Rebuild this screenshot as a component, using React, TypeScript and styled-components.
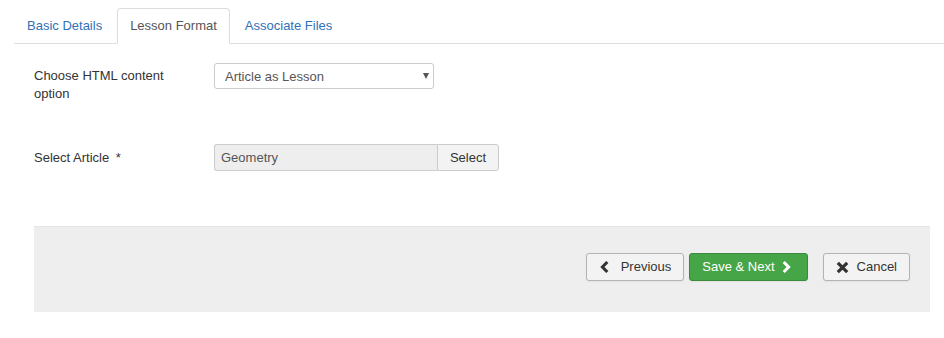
import React, { FC } from "react";
import styled, { createGlobalStyle } from "styled-components";

const GlobalStyle = createGlobalStyle`
	body {
		margin: 0;
		background: #fff;
		font-family: "Liberation Sans", Arial, sans-serif;
		font-size: 13px;
		line-height: 18px;
		color: #333;
	}
`;

interface TabProps {
	active?: boolean;
}

interface ButtonProps {
	variant?: "default" | "success";
	offset?: number;
	iconGap: number;
	padL: number;
	padR: number;
}

interface LabelProps {
	top?: number;
}

const tabs = ["Basic Details", "Lesson Format", "Associate Files"];

const ChevronLeft: FC = () => (
	<svg width="9" height="12" viewBox="0 0 9 12">
		<path d="M7.3 1 L2.4 6 L7.3 11" fill="none" stroke="#333" strokeWidth="3" />
	</svg>
);

const ChevronRight: FC = () => (
	<svg width="9" height="12" viewBox="0 0 9 12">
		<path d="M1.7 1 L6.6 6 L1.7 11" fill="none" stroke="#fff" strokeWidth="3" />
	</svg>
);

const Cross: FC = () => (
	<svg width="13" height="13" viewBox="0 0 13 13">
		<path d="M1.8 1.8 L11.2 11.2 M11.2 1.8 L1.8 11.2" stroke="#333" strokeWidth="3.2" />
	</svg>
);

const App: FC = () => {
	return (
		<Page>
			<GlobalStyle />
			<TabBar>
				{tabs.map((t) => (
					<Tab key={t} active={t === "Lesson Format"}>
						{t}
					</Tab>
				))}
			</TabBar>
			<Content>
				<FormRow style={{ height: 81 }}>
					<Label top={4}>Choose HTML content option</Label>
					<SelectBox>
						<span>Article as Lesson</span>
						<Caret />
					</SelectBox>
				</FormRow>
				<FormRow>
					<Label top={5}>
						Select Article <Star>*</Star>
					</Label>
					<InputGroup>
						<ReadOnlyInput>Geometry</ReadOnlyInput>
						<AddonButton>Select</AddonButton>
					</InputGroup>
				</FormRow>
				<Footer>
					<Button iconGap={12} padL={13} padR={12}>
						<ChevronLeft />
						Previous
					</Button>
					<Button variant="success" offset={5} iconGap={7} padL={12} padR={16}>
						Save &amp; Next
						<ChevronRight />
					</Button>
					<Button offset={15} iconGap={8} padL={12} padR={12}>
						<Cross />
						Cancel
					</Button>
				</Footer>
			</Content>
		</Page>
	);
};

const Page = styled.div`
	padding: 8px 0 0 14px;
`;

const TabBar = styled.div`
	display: flex;
	border-bottom: 1px solid #ddd;
	height: 35px;
`;

const Tab = styled.div<TabProps>`
	padding: 8px 12px;
	line-height: 18px;
	margin-right: 2px;
	margin-bottom: -1px;
	border: 1px solid ${(p) => (p.active ? "#ddd" : "transparent")};
	border-bottom-color: ${(p) => (p.active ? "#fff" : "transparent")};
	border-radius: 4px 4px 0 0;
	background: ${(p) => (p.active ? "#fff" : "transparent")};
	color: ${(p) => (p.active ? "#555" : "#3071b8")};
`;

const Content = styled.div`
	padding: 19px 14px 0 20px;
`;

const FormRow = styled.div`
	display: flex;
	align-items: flex-start;
`;

const Label = styled.div<LabelProps>`
	width: 160px;
	padding-top: ${(p) => p.top ?? 4}px;
	margin-right: 20px;
	color: #333;
`;

const Star = styled.span`
	margin-left: 3px;
`;

const SelectBox = styled.div`
	position: relative;
	box-sizing: border-box;
	width: 220px;
	height: 26px;
	border: 1px solid #ccc;
	border-radius: 3px;
	padding: 4px 10px 3px;
	color: #555;
	background: #fff;
`;

const Caret = styled.span`
	position: absolute;
	right: 4px;
	top: 9px;
	width: 0;
	height: 0;
	border-left: 3px solid transparent;
	border-right: 3px solid transparent;
	border-top: 6px solid #555;
`;

const InputGroup = styled.div`
	display: flex;
	height: 27px;
`;

const ReadOnlyInput = styled.div`
	box-sizing: border-box;
	width: 223px;
	height: 27px;
	padding: 4px 6px;
	background: #eee;
	border: 1px solid #ccc;
	border-right: none;
	border-radius: 3px 0 0 3px;
	color: #555;
`;

const AddonButton = styled.div`
	box-sizing: border-box;
	width: 62px;
	height: 27px;
	padding: 4px 0;
	text-align: center;
	background: #f3f3f3;
	border: 1px solid #ccc;
	border-radius: 0 3px 3px 0;
	color: #333;
`;

const Footer = styled.div`
	margin-top: 55px;
	height: 86px;
	box-sizing: border-box;
	background: #eee;
	border-top: 1px solid #e5e5e5;
	display: flex;
	justify-content: flex-end;
	align-items: flex-start;
	padding: 26px 20px 0 0;
`;

const Button = styled.div<ButtonProps>`
	box-sizing: border-box;
	height: 28px;
	display: flex;
	align-items: center;
	gap: ${(p) => p.iconGap}px;
	padding: 0 ${(p) => p.padR}px 0 ${(p) => p.padL}px;
	margin-left: ${(p) => p.offset ?? 0}px;
	border-radius: 3px;
	border: 1px solid ${(p) => (p.variant === "success" ? "#3b8a3b" : "#b3b3b3")};
	background: ${(p) => (p.variant === "success" ? "#46a546" : "#f3f3f3")};
	color: ${(p) => (p.variant === "success" ? "#fff" : "#333")};
	box-shadow: 0 1px 2px rgba(0, 0, 0, 0.05);
`;

export default App;
